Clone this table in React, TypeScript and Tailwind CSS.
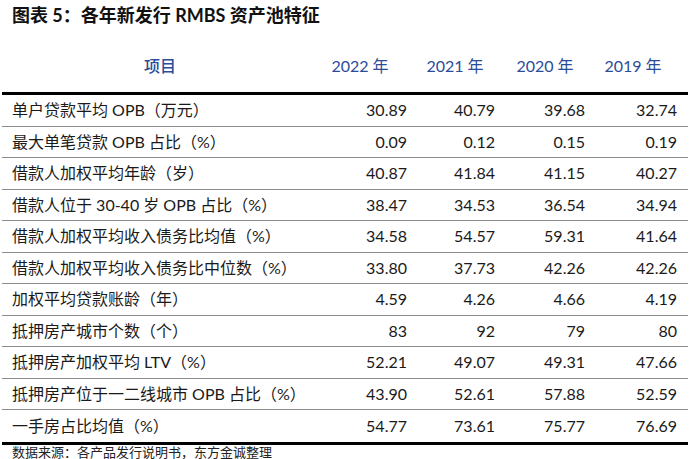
const years = ["2022 年", "2021 年", "2020 年", "2019 年"];

const rows: [string, string, string, string, string][] = [
  ["单户贷款平均 OPB（万元）", "30.89", "40.79", "39.68", "32.74"],
  ["最大单笔贷款 OPB 占比（%）", "0.09", "0.12", "0.15", "0.19"],
  ["借款人加权平均年龄（岁）", "40.87", "41.84", "41.15", "40.27"],
  ["借款人位于 30-40 岁 OPB 占比（%）", "38.47", "34.53", "36.54", "34.94"],
  ["借款人加权平均收入债务比均值（%）", "34.58", "54.57", "59.31", "41.64"],
  ["借款人加权平均收入债务比中位数（%）", "33.80", "37.73", "42.26", "42.26"],
  ["加权平均贷款账龄（年）", "4.59", "4.26", "4.66", "4.19"],
  ["抵押房产城市个数（个）", "83", "92", "79", "80"],
  ["抵押房产加权平均 LTV（%）", "52.21", "49.07", "49.31", "47.66"],
  ["抵押房产位于一二线城市 OPB 占比（%）", "43.90", "52.61", "57.88", "52.59"],
  ["一手房占比均值（%）", "54.77", "73.61", "75.77", "76.69"],
];

const headPad = ["", "", "", "pr-[12px]"];
const cellPad = ["pr-[3px]", "pr-[5px]", "pr-[5px]", "pr-[11px]"];

const font = { fontFamily: '"Lato", "Noto Sans CJK SC", sans-serif' };

export default function App() {
  return (
    <div className="w-[700px] h-[459px] bg-white text-[#1a1a1a] overflow-hidden" style={font}>
      <div className="h-[30px] flex items-center pl-[12px] text-[18px] font-bold text-[#111]">
        图表 5：各年新发行 RMBS 资产池特征
      </div>
      <div className="ml-[2px] w-[686px]">
        <div className="grid grid-cols-[308px_100px_90px_90px_98px] h-[62px] pt-[10px] items-center text-[16px] text-[#2b4c98]">
          <div className="text-center pl-[8px] font-medium">项目</div>
          {years.map((y, i) => (
            <div key={y} className={`text-center ${headPad[i]}`}>
              {y}
            </div>
          ))}
        </div>
        <div className="border-t-[3px] border-b-[3px] border-black">
          {rows.map((r, ri) => (
            <div
              key={r[0]}
              className={`grid grid-cols-[308px_100px_90px_90px_98px] h-[31.5px] items-center text-[16px] ${
                ri < rows.length - 1 ? "border-b border-[#8c8c8c]" : ""
              }`}
            >
              <div className="pl-[10px] whitespace-nowrap">{r[0]}</div>
              {r.slice(1).map((v, i) => (
                <div key={i} className={`text-right ${cellPad[i]}`}>
                  {v}
                </div>
              ))}
            </div>
          ))}
        </div>
      </div>
      <div className="pl-[12px] text-[13px] leading-[14px] text-[#222]">数据来源：各产品发行说明书，东方金诚整理</div>
    </div>
  );
}
